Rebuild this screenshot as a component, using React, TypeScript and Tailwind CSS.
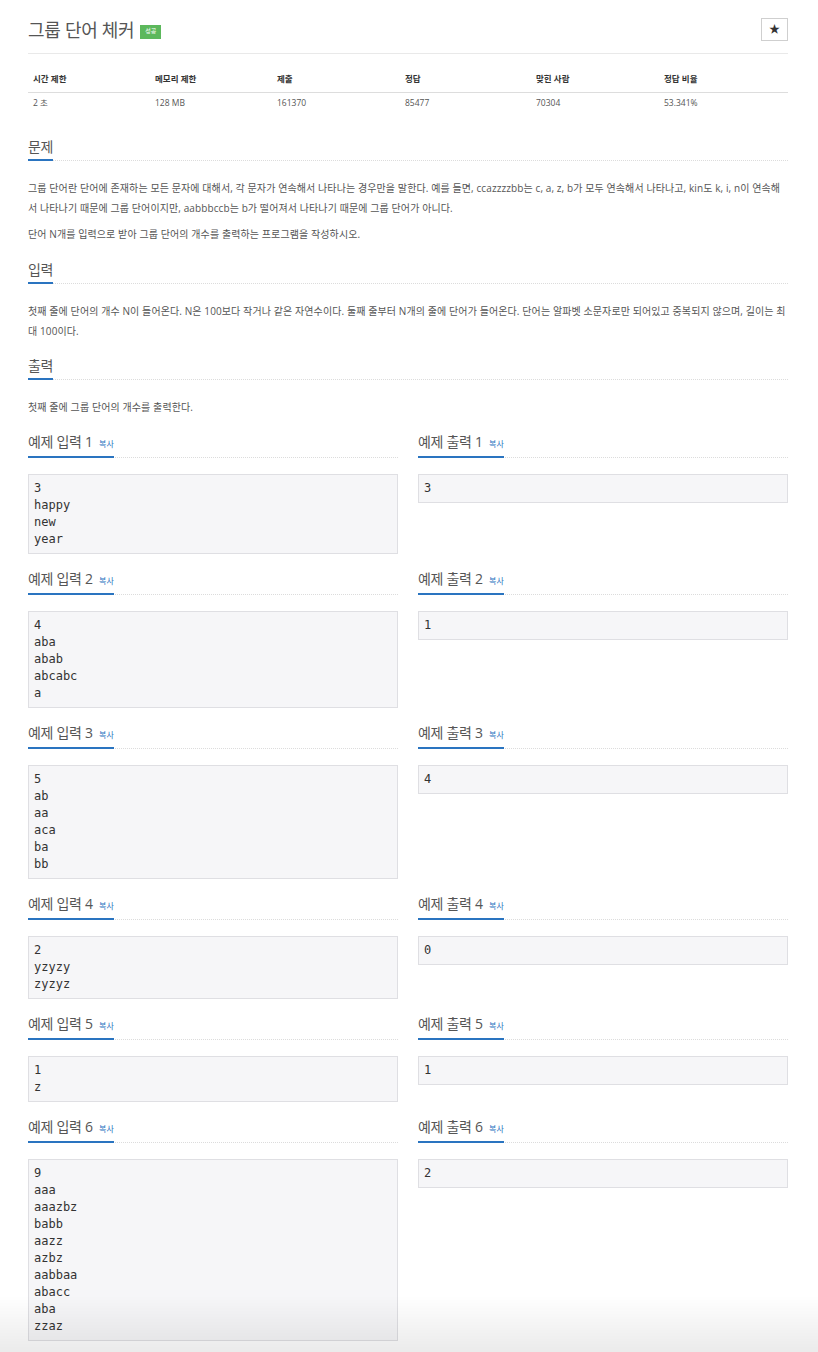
import React from 'react';

const stats = [
  { label: '시간 제한', value: '2 초' },
  { label: '메모리 제한', value: '128 MB' },
  { label: '제출', value: '161370' },
  { label: '정답', value: '85477' },
  { label: '맞힌 사람', value: '70304' },
  { label: '정답 비율', value: '53.341%' },
];

const samples = [
  { input: '3\nhappy\nnew\nyear', output: '3' },
  { input: '4\naba\nabab\nabcabc\na', output: '1' },
  { input: '5\nab\naa\naca\nba\nbb', output: '4' },
  { input: '2\nyzyzy\nzyzyz', output: '0' },
  { input: '1\nz', output: '1' },
  { input: '9\naaa\naaazbz\nbabb\naazz\nazbz\naabbaa\nabacc\naba\nzzaz', output: '2' },
];

const kr = { fontFamily: '"Open Sans", "Noto Sans CJK KR", sans-serif' };

function Heading({ children }: { children: React.ReactNode }) {
  return (
    <div className="flex border-b border-dotted border-[#dcdcdc]">
      <h2 className="-mb-px border-b-2 border-[#2a74c0] pb-[2px] text-[14px] leading-[20px] tracking-[-0.3px] text-[#555]">
        {children}
      </h2>
    </div>
  );
}

function SampleBox({ title, text }: { title: string; text: string }) {
  return (
    <div className="flex flex-col">
      <Heading>
        {title} <span className="ml-[3px] text-[8px] tracking-normal text-[#2a74c0]">복사</span>
      </Heading>
      <pre className="mt-4 border border-[#dfdfe3] bg-[#f6f6f8] px-[5px] py-[5px] text-[12px] leading-[17px] text-[#333] [font-family:'DejaVu_Sans_Mono',monospace]">
        {text}
      </pre>
    </div>
  );
}

export default function App() {
  return (
    <div className="min-h-[1352px] bg-white px-[28px] pb-10 pt-[18px]" style={kr}>
      <div className="w-[760px]">
        {/* title */}
        <div className="flex h-[36px] items-start justify-between border-b border-[#e9e9e9]">
          <div className="mt-[1px] flex items-center gap-[6px]">
            <h1 className="text-[18px] leading-[22px] tracking-[-0.3px] text-[#555]">그룹 단어 체커</h1>
            <span className="mt-[3px] flex h-[14px] w-[21px] items-center justify-center bg-[#5cb85c] text-[6px] text-white">
              성공
            </span>
          </div>
          <button className="flex h-[23px] w-[27px] items-center justify-center border border-[#cfcfcf] text-[11px] text-[#333]">
            ★
          </button>
        </div>

        {/* stats table */}
        <div className="mt-[16px] text-[8.5px] text-[#333]">
          <div className="grid grid-cols-[122px_122px_128px_131px_128px_129px] border-b border-[#dddddd] pb-[4px]">
            {stats.map((s) => (
              <div key={s.label} className="pl-[5px] font-bold leading-[18px]">
                {s.label}
              </div>
            ))}
          </div>
          <div className="grid grid-cols-[122px_122px_128px_131px_128px_129px] pt-[1px]">
            {stats.map((s) => (
              <div key={s.label} className="pl-[5px] leading-[18px] text-[#555]">
                {s.value}
              </div>
            ))}
          </div>
        </div>

        {/* 문제 */}
        <section className="mt-[25px]">
          <Heading>문제</Heading>
          <div className="mt-[17px] text-[10px] leading-[20px] tracking-[0.1px] text-[#555]">
            <p>
              그룹 단어란 단어에 존재하는 모든 문자에 대해서, 각 문자가 연속해서 나타나는 경우만을 말한다. 예를 들면, ccazzzzbb는 c, a, z, b가 모두 연속해서 나타나고, kin도 k, i, n이 연속해서 나타나기 때문에 그룹 단어이지만, aabbbccb는 b가 떨어져서 나타나기 때문에 그룹 단어가 아니다.
            </p>
            <p className="mt-[6px]">단어 N개를 입력으로 받아 그룹 단어의 개수를 출력하는 프로그램을 작성하시오.</p>
          </div>
        </section>

        {/* 입력 */}
        <section className="mt-4">
          <Heading>입력</Heading>
          <p className="mt-[17px] text-[10px] leading-[20px] tracking-[0.1px] text-[#555]">
            첫째 줄에 단어의 개수 N이 들어온다. N은 100보다 작거나 같은 자연수이다. 둘째 줄부터 N개의 줄에 단어가 들어온다. 단어는 알파벳 소문자로만 되어있고 중복되지 않으며, 길이는 최대 100이다.
          </p>
        </section>

        {/* 출력 */}
        <section className="mt-[15px]">
          <Heading>출력</Heading>
          <p className="mt-[17px] text-[10px] leading-[20px] tracking-[0.1px] text-[#555]">
            첫째 줄에 그룹 단어의 개수를 출력한다.
          </p>
        </section>

        {/* samples */}
        <div className="flex flex-col">
          {samples.map((s, i) => (
            <div key={i} className="mt-[15px] grid grid-cols-2 items-start gap-x-5">
              <SampleBox title={`예제 입력 ${i + 1}`} text={s.input} />
              <SampleBox title={`예제 출력 ${i + 1}`} text={s.output} />
            </div>
          ))}
        </div>
      </div>

      {/* bottom fade */}
      <div className="pointer-events-none fixed bottom-0 left-0 right-0 h-[56px] bg-gradient-to-b from-transparent to-black/[0.08]" />
    </div>
  );
}
